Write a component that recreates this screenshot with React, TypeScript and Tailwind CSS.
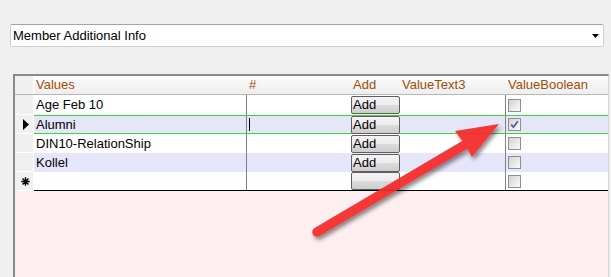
import React from "react";

type Row = { value: string; checked?: boolean; selected?: boolean; lavender?: boolean; isNew?: boolean };

const rows: Row[] = [
  { value: "Age Feb 10" },
  { value: "Alumni", checked: true, selected: true, lavender: true },
  { value: "DIN10-RelationShip" },
  { value: "Kollel", lavender: true },
  { value: "", isNew: true },
];

const CheckBox: React.FC<{ checked?: boolean }> = ({ checked }) => (
  <span className="w-[13px] h-[13px] border border-[#8e8f8f] bg-[linear-gradient(135deg,#d2d2d2,#fbfbfb)] flex items-center justify-center">
    {checked && (
      <svg width="11" height="11" viewBox="0 0 11 11">
        <path d="M2.2 5.6 L4.4 8.2 L8.8 2.2" fill="none" stroke="#4a5c9e" strokeWidth="1.7" />
      </svg>
    )}
  </span>
);

const AddButton: React.FC<{ label: string }> = ({ label }) => (
  <div className="h-[18px] w-full border border-[#5f5f5f] rounded-[2px] bg-[linear-gradient(#f4f4f4,#ececec_50%,#dcdcdc_50%,#cdcdcd)] text-[13px] leading-[16px] text-black pl-[1px]">
    {label}
  </div>
);

const RowHeader: React.FC<{ row: Row; h: string }> = ({ row, h }) => (
  <div className={`w-[19px] ${h} bg-[#f0f0f0] border-b border-r border-white flex items-center justify-center`}>
    {row.selected && (
      <svg width="6" height="11" viewBox="0 0 6 11" className="ml-[3px]">
        <path d="M0 0 L6 5.5 L0 11 Z" fill="#000" />
      </svg>
    )}
    {row.isNew && (
      <svg width="9" height="9" viewBox="0 0 9 9" className="ml-[2px]">
        <path d="M4.5 0.3 V8.7 M0.3 4.5 H8.7 M1.5 1.5 L7.5 7.5 M7.5 1.5 L1.5 7.5" stroke="#000" strokeWidth="1.4" />
      </svg>
    )}
  </div>
);

export default function App() {
  return (
    <div className="relative w-[611px] h-[277px] bg-[#f0f0f0] overflow-hidden font-['Liberation_Sans',Arial,sans-serif]">
      <div className="pt-[24px] pl-[10px] pr-[7px]">
        <div className="h-[23px] bg-white border border-[#d0d0d0] border-t-[#a4a4a4] rounded-[2px] flex items-center justify-between pl-[2px] pr-[4px]">
          <span className="text-[13px] text-black">Member Additional Info</span>
          <svg width="7" height="4" viewBox="0 0 7 4">
            <path d="M0 0 H7 L3.5 4 Z" fill="#000" />
          </svg>
        </div>
      </div>

      <div className="mt-[27px] ml-[13px] w-[596px] h-[210px] border-t-2 border-l-2 border-[#8a8a8a] border-r border-r-[#d4d4d4] bg-[#fdefef] flex flex-col">
        <div className="flex h-[19px] border-b border-[#b8b8b8] bg-[linear-gradient(#ffffff,#f7f7f7_30%,#eeeeee)] text-[13px] leading-[18px] text-[#a04e08]">
          <div className="w-[19px] bg-[#f0f0f0] border-r border-white" />
          <div className="w-[213px] pl-[2px]">Values</div>
          <div className="w-[104px] pl-[2px]">#</div>
          <div className="w-[49px] pl-[2px]">Add</div>
          <div className="w-[106px] pl-[2px]">ValueText3</div>
          <div className="flex-1 pl-[2px]">ValueBoolean</div>
        </div>

        {rows.map((row, i) => {
          const h = i === 0 ? "h-[20px]" : "h-[19px]";
          return (
            <div key={i} className={`flex ${h} text-[13px] text-black`}>
              <RowHeader row={row} h={h} />
              <div
                className={`flex flex-1 ${row.lavender ? "bg-[#e6e6fa]" : "bg-white"} ${
                  row.selected ? "border-y border-[#33dd33]" : ""
                } ${i === rows.length - 1 ? "border-b border-black" : ""}`}
              >
                <div className="w-[213px] border-r border-[#808080] pl-[2px] flex items-center">{row.value}</div>
                <div className="w-[104px] flex items-center pl-[2px]">
                  {row.selected && <span className="w-px h-[13px] bg-black" />}
                </div>
                <div className="w-[49px] flex items-center">
                  <AddButton label={row.isNew ? "" : "Add"} />
                </div>
                <div className="w-[106px] border-r border-[#808080]" />
                <div className="flex-1 flex items-center pl-[2px]">
                  <CheckBox checked={row.checked} />
                </div>
              </div>
            </div>
          );
        })}
      </div>

      <svg className="absolute inset-0 pointer-events-none" width="611" height="277" viewBox="0 0 611 277">
        <defs>
          <filter id="arrowShadow" x="-20%" y="-20%" width="140%" height="140%">
            <feDropShadow dx="2" dy="3" stdDeviation="2" floodColor="#000" floodOpacity="0.5" />
          </filter>
        </defs>
        <g filter="url(#arrowShadow)" opacity="0.93">
          <line x1="317" y1="232" x2="468" y2="143" stroke="#f42a2a" strokeWidth="9.5" strokeLinecap="round" />
          <path d="M499 124 L455 131 L464 143 L472 157 Z" fill="#f42a2a" />
        </g>
      </svg>
    </div>
  );
}
